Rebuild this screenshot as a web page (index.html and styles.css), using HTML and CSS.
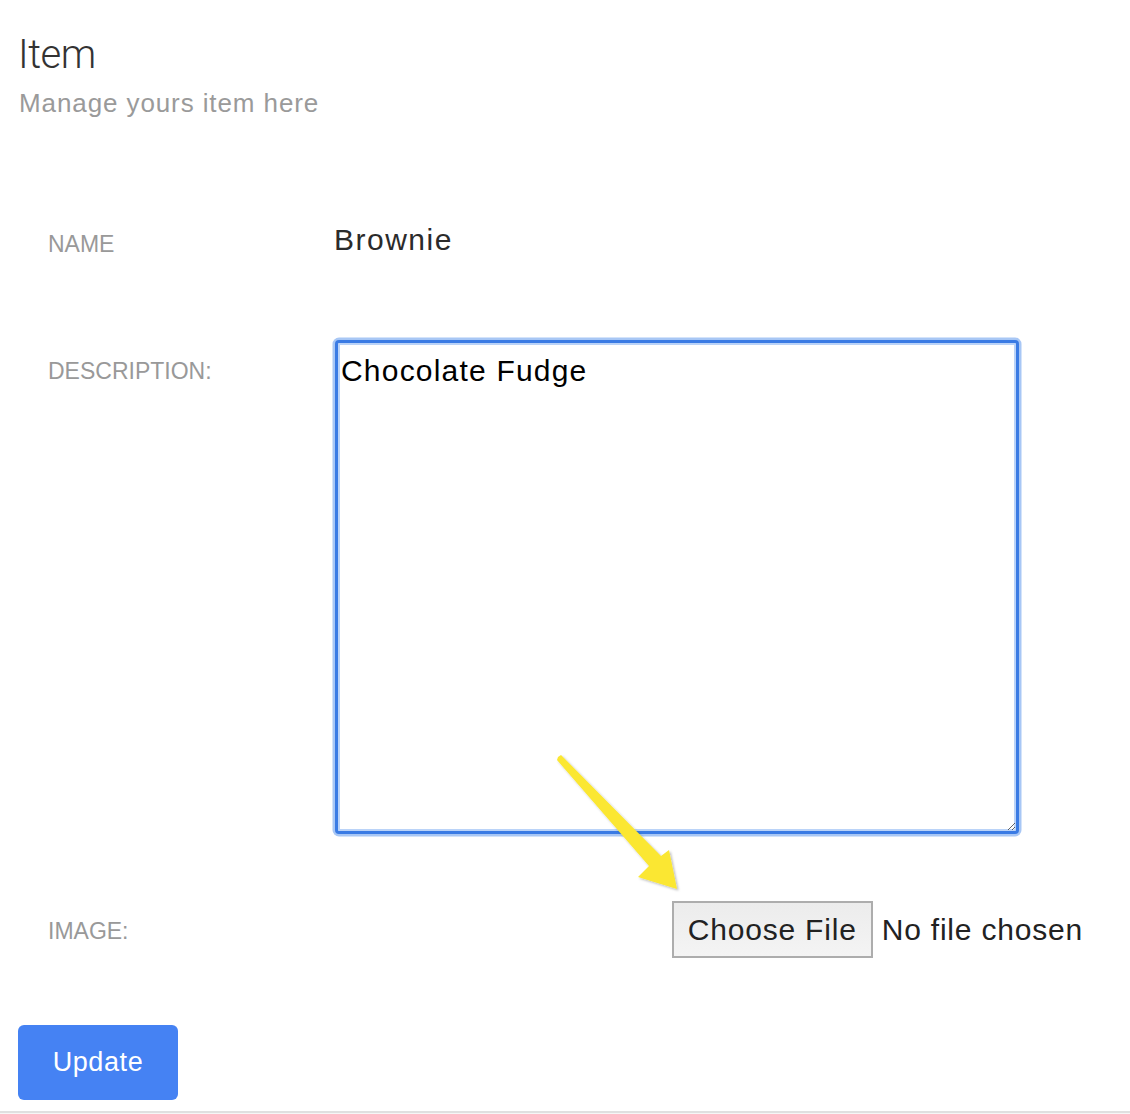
FILE: index.html
```html
<!DOCTYPE html>
<html lang="en">
<head>
<meta charset="utf-8">
<title>Item</title>
<link rel="stylesheet" href="styles.css">
</head>
<body>
<div class="page">
  <header class="head">
    <h1 class="title">Item</h1>
    <p class="subtitle">Manage yours item here</p>
  </header>
  <form class="form">
    <div class="row row-name">
      <label class="label">NAME</label>
      <div class="value">Brownie</div>
    </div>
    <div class="row row-desc">
      <label class="label label-desc">DESCRIPTION:</label>
      <textarea class="desc">Chocolate Fudge</textarea>
    </div>
    <div class="row row-image">
      <label class="label label-image">IMAGE:</label>
      <div class="file">
        <span class="file-btn">Choose File</span>
        <span class="file-name">No file chosen</span>
      </div>
    </div>
    <button type="button" class="update">Update</button>
  </form>
  <div class="footer-line"></div>
  <svg class="arrow" width="140" height="150" viewBox="0 0 140 150" aria-hidden="true">
    <defs>
      <filter id="sh" x="-20%" y="-20%" width="140%" height="140%">
        <feDropShadow dx="1.5" dy="1.5" stdDeviation="1.2" flood-color="#000" flood-opacity="0.28"/>
      </filter>
    </defs>
    <polygon filter="url(#sh)" fill="#fbe730" points="5,5 8,3 108,104 116,98 124,137 85,125 96,114 4,8"/>
  </svg>
</div>
</body>
</html>
```
FILE: styles.css
```css
html, body {
  margin: 0;
  padding: 0;
  background: #fff;
}

.page {
  position: relative;
  width: 1130px;
  height: 1114px;
  overflow: hidden;
  font-family: "Helvetica Neue", "Liberation Sans", Arial, sans-serif;
}

.head {
  padding: 34px 0 0 18px;
}

.title {
  margin: 0;
  font-family: "Helvetica Neue", Roboto, "Liberation Sans", sans-serif;
  font-weight: 300;
  font-size: 40px;
  line-height: 42px;
  color: #333;
  letter-spacing: -0.5px;
}

.subtitle {
  margin: 12px 0 0 1px;
  font-size: 26px;
  line-height: 30px;
  letter-spacing: 0.9px;
  color: #9a9a9a;
}

.form {
  padding: 0 47px 0 18px;
}

.row {
  display: grid;
  grid-template-columns: 285px 1fr;
  padding-left: 30px;
}

.label {
  font-size: 23px;
  line-height: 36px;
  color: #999;
}

.row-name {
  margin-top: 104px;
}

.row-name .label {
  padding-top: 4px;
}

.value {
  padding-left: 1px;
  font-size: 30px;
  line-height: 36px;
  letter-spacing: 1.5px;
  color: #2b2b2b;
}

.row-desc {
  margin-top: 78px;
  align-items: start;
}

.label-desc {
  padding-top: 13px;
}

.desc {
  display: block;
  box-sizing: border-box;
  width: 684px;
  height: 494px;
  margin: 0 0 0 2px;
  padding: 10px 3px 7px;
  border: 3px solid #3a7be4;
  border-radius: 4px;
  box-shadow: 0 0 0 2.5px #a8c7f5, inset 0 0 0 2px #bad3f8;
  outline: none;
  font-family: "Helvetica Neue", "Liberation Sans", Arial, sans-serif;
  font-size: 30px;
  line-height: 36px;
  letter-spacing: 1.2px;
  color: #000;
  background: #fff;
  resize: both;
}

.row-image {
  margin-top: 67px;
  height: 57px;
  align-items: center;
}

.label-image {
  padding-top: 3px;
}

.file {
  justify-self: end;
  display: flex;
  align-items: center;
  gap: 9px;
}

.file-btn {
  box-sizing: border-box;
  width: 201px;
  height: 57px;
  display: flex;
  align-items: center;
  justify-content: center;
  border: 2px solid #adadad;
  background: linear-gradient(#ececec, #f4f4f4);
  font-size: 30px;
  letter-spacing: 0.8px;
  color: #222;
}

.file-name {
  font-size: 30px;
  letter-spacing: 0.8px;
  color: #222;
}

.update {
  display: block;
  width: 160px;
  height: 75px;
  margin: 67px 0 0 0;
  padding: 0;
  border: none;
  border-radius: 6px;
  background: #4582f3;
  color: #fff;
  font-family: "Helvetica Neue", "Liberation Sans", Arial, sans-serif;
  font-size: 27px;
  letter-spacing: 0.6px;
  cursor: pointer;
}

.footer-line {
  margin-top: 11px;
  height: 4px;
  border-top: 2px solid #e0e0e0;
  background: #f6f6f6;
}

.arrow {
  position: absolute;
  left: 553px;
  top: 752px;
  overflow: visible;
}
```
